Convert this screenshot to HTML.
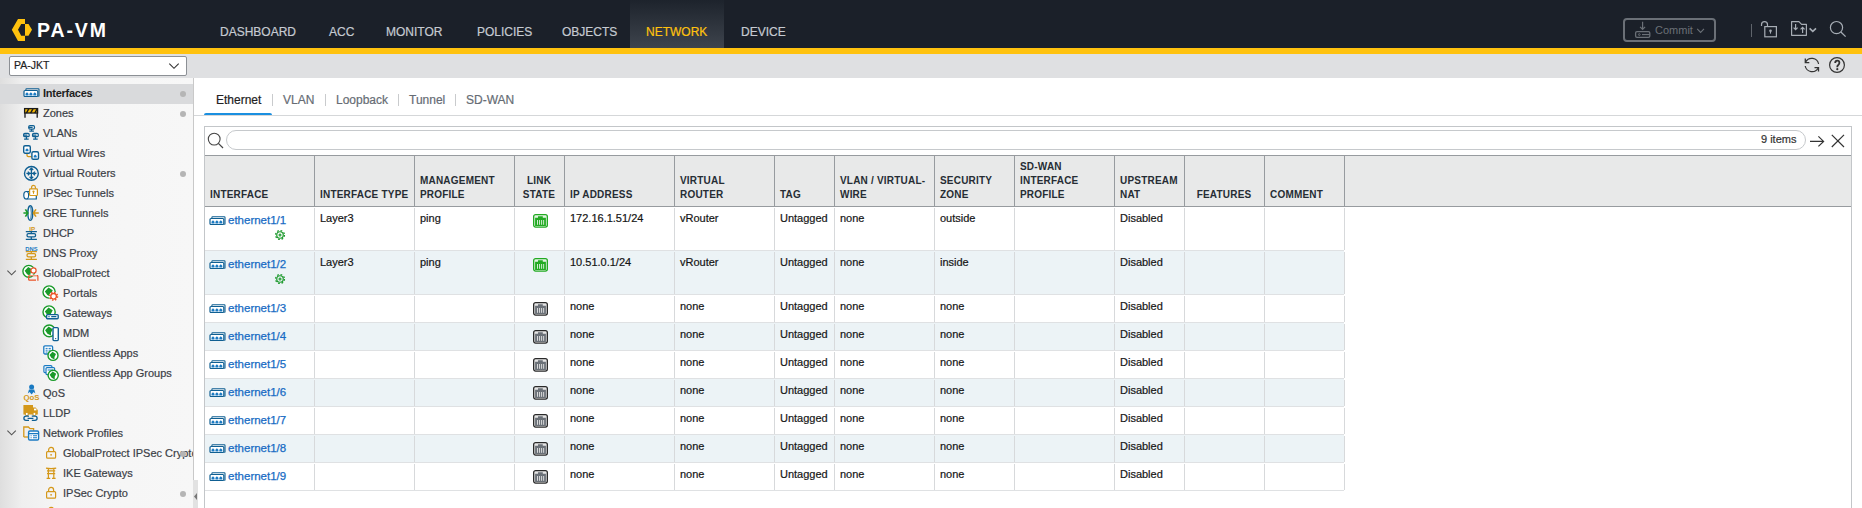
<!DOCTYPE html>
<html><head><meta charset="utf-8"><title>PA-VM Network Interfaces</title>
<style>
html,body{margin:0;padding:0;width:1862px;height:508px;overflow:hidden;background:#fff;font-family:"Liberation Sans", sans-serif;}
.t{position:absolute;white-space:nowrap;line-height:1;}
.s{-webkit-text-stroke:0.2px currentColor}
.r{position:absolute;}
svg.r{overflow:visible}
</style></head><body>
<div class="r" style="left:0px;top:0px;width:1862px;height:48px;background:#1b2029"></div>
<div class="r" style="left:630px;top:0px;width:94px;height:48px;background:linear-gradient(#1d232c,#3e444d)"></div>
<div class="r" style="left:0px;top:48px;width:1862px;height:6px;background:#ffc20e"></div>
<svg class="r" style="left:0px;top:0px;" width="40" height="48" viewBox="0 0 40 48"><polygon fill="#ffc20e" points="18,19 25,19 25,24 21.2,24 18,29.7 21.2,35.7 25,35.7 25,41 18,41 11.8,29.7"/><polygon fill="#ffc20e" points="25,24 28.5,24 32,29.7 28.5,35.7 25,35.7"/></svg>
<div class="t" style="left:37px;top:21px;font-size:19.5px;color:#ffffff;font-weight:bold;letter-spacing:1.9px">PA-VM</div>
<div class="t s" style="left:220px;top:26px;font-size:12px;color:#c5cad1;font-weight:normal;">DASHBOARD</div>
<div class="t s" style="left:329px;top:26px;font-size:12px;color:#c5cad1;font-weight:normal;">ACC</div>
<div class="t s" style="left:386px;top:26px;font-size:12px;color:#c5cad1;font-weight:normal;">MONITOR</div>
<div class="t s" style="left:477px;top:26px;font-size:12px;color:#c5cad1;font-weight:normal;">POLICIES</div>
<div class="t s" style="left:562px;top:26px;font-size:12px;color:#c5cad1;font-weight:normal;">OBJECTS</div>
<div class="t s" style="left:646px;top:26px;font-size:12px;color:#ffc20e;font-weight:normal;">NETWORK</div>
<div class="t s" style="left:741px;top:26px;font-size:12px;color:#c5cad1;font-weight:normal;">DEVICE</div>
<div class="r" style="left:1623px;top:18px;width:93px;height:24px;box-sizing:border-box;border:2px solid #6b7077;border-radius:4px"></div>
<svg class="r" style="left:1634px;top:20px;" width="18" height="20" viewBox="0 0 18 20"><path d="M8.6 1.8 V9.4 M6.1 6.9 L8.6 9.4 L11.1 6.9" stroke="#6b7077" stroke-width="1.2" fill="none"/><rect x="1.6" y="11.7" width="14.2" height="5.7" rx="1.4" stroke="#6b7077" stroke-width="1.3" fill="none"/><circle cx="5.3" cy="14.55" r="0.9" stroke="#6b7077" stroke-width="0.9" fill="none"/><path d="M8 14.55 H15.8" stroke="#6b7077" stroke-width="1.2"/></svg>
<div class="t s" style="left:1655px;top:25px;font-size:11px;color:#6b7077;font-weight:normal;-webkit-text-stroke:0">Commit</div>
<svg class="r" style="left:1696px;top:27px;" width="10" height="8" viewBox="0 0 10 8"><path d="M1.2 1.8 L4.6 5.4 L8 1.8" stroke="#6b7077" stroke-width="1.1" fill="none"/></svg>
<div class="r" style="left:1751px;top:24px;width:1px;height:13px;background:#5f646b"></div>
<svg class="r" style="left:1759px;top:19px;" width="20" height="20" viewBox="0 0 20 20"><path d="M2.5 7 V5.7 A3 3 0 0 1 8.5 5.7 V7.4" stroke="#a7adb5" stroke-width="1.2" fill="none"/><rect x="5.8" y="7.6" width="11.6" height="10.2" stroke="#a7adb5" stroke-width="1.2" fill="none"/><circle cx="11.5" cy="11.7" r="1.3" fill="#a7adb5"/><path d="M11.5 12 V14.6" stroke="#a7adb5" stroke-width="1.1"/></svg>
<svg class="r" style="left:1789px;top:19px;" width="30" height="20" viewBox="0 0 30 20"><path d="M2.6 2.6 H9.9 L12.6 5.3 H17.4 V16.3 H2.6 Z" stroke="#a7adb5" stroke-width="1.2" fill="none" stroke-linejoin="round"/><path d="M6.6 5 V10.6 M4.6 8.6 L6.6 10.6 L8.6 8.6" stroke="#a7adb5" stroke-width="1.2" fill="none"/><path d="M13.6 8.3 V14 M11.6 10.3 L13.6 8.3 L15.6 10.3" stroke="#a7adb5" stroke-width="1.2" fill="none"/><path d="M20.6 9.4 L23.8 12.4 L27 9.4" stroke="#a7adb5" stroke-width="1.6" fill="none"/></svg>
<svg class="r" style="left:1828px;top:19px;" width="20" height="20" viewBox="0 0 20 20"><circle cx="8.5" cy="8.6" r="6.1" stroke="#a7adb5" stroke-width="1.2" fill="none"/><path d="M12.9 13 L17.6 17.6" stroke="#a7adb5" stroke-width="1.3"/></svg>
<div class="r" style="left:0px;top:54px;width:1862px;height:24px;background:#dfe0e2"></div>
<div class="r" style="left:9px;top:56px;width:178px;height:20px;box-sizing:border-box;background:#fff;border:1px solid #8c9095;border-radius:2px"></div>
<div class="t s" style="left:14px;top:60px;font-size:10.5px;color:#1f1f1f;font-weight:normal;">PA-JKT</div>
<svg class="r" style="left:168px;top:62px;" width="12" height="8" viewBox="0 0 12 8"><path d="M1.3 1.6 L6 6.3 L10.7 1.6" stroke="#333" stroke-width="1.1" fill="none"/></svg>
<svg class="r" style="left:1803px;top:56px;" width="18" height="18" viewBox="0 0 18 18"><path d="M15.6 8 A7 7 0 0 0 2.6 6" stroke="#333" stroke-width="1.2" fill="none"/><path d="M2.2 10 A7 7 0 0 0 15.2 12" stroke="#333" stroke-width="1.2" fill="none"/><path d="M2.3 2.6 V6.6 H6.3" stroke="#333" stroke-width="1.3" fill="none"/><path d="M15.5 15.6 V11.6 H11.5" stroke="#333" stroke-width="1.3" fill="none"/></svg>
<svg class="r" style="left:1828px;top:56px;" width="18" height="18" viewBox="0 0 18 18"><circle cx="9" cy="9" r="7.4" stroke="#333" stroke-width="1.2" fill="none"/><path d="M7.2 7.1 Q7.2 4.7 9.3 4.7 Q11.4 4.7 11.4 6.8 Q11.4 8.1 10.3 8.9 Q9.3 9.6 9.3 10.7 V11.3" stroke="#333" stroke-width="1.8" fill="none"/><circle cx="9.3" cy="13.2" r="1.1" fill="#333"/></svg>
<div style="position:absolute;left:0;top:0;width:193px;height:508px;overflow:hidden">
<div class="r" style="left:0px;top:78px;width:193px;height:430px;background:linear-gradient(to right,#dedede 0px,#efefef 22px,#f5f5f5 60px,#f7f7f7 193px)"></div>
<div class="r" style="left:0px;top:84px;width:193px;height:20px;background:#d9dadc"></div>
<svg class="r" style="left:23px;top:87px;" width="20" height="20" viewBox="0 0 20 20"><path d="M2.9 3 V2.5 Q2.9 1.8 3.6 1.8 H15.3 Q16 1.8 16 2.5 V8.7 Q16 9.4 15.3 9.4" stroke="#0f5f92" stroke-width="1.1" fill="none"/><rect x="1" y="3.5" width="13.8" height="6" rx="1" stroke="#0f5f92" stroke-width="1.2" fill="#fff"/><path d="M2.5 8.5 V6.8 L4 5.3 L5.5 6.8 V8.5Z M6.4 8.5 V6.8 L7.9 5.3 L9.4 6.8 V8.5Z M10.3 8.5 V6.8 L11.8 5.3 L13.3 6.8 V8.5Z" fill="#1a7ac2"/></svg>
<div class="t" style="left:43px;top:88px;font-size:11px;color:#1f1f1f;font-weight:bold;letter-spacing:-0.25px">Interfaces</div>
<div class="r" style="left:180px;top:90.5px;width:6px;height:6px;border-radius:3px;background:#b5b5b5"></div>
<svg class="r" style="left:23px;top:104px;" width="20" height="20" viewBox="0 0 20 20"><rect x="1.6" y="4.6" width="13" height="4.4" fill="#f2b705" stroke="#1b1b1b" stroke-width="1.3"/><path d="M3.4 9.2 L6 4.4 M7.6 9.2 L10.2 4.4 M11.8 9.2 L14.4 4.4" stroke="#1b1b1b" stroke-width="1.4"/><path d="M2 9 V13.8 M14.2 9 V13.8" stroke="#1b1b1b" stroke-width="1.3"/></svg>
<div class="t s" style="left:43px;top:108px;font-size:11px;color:#3b4046;font-weight:normal;">Zones</div>
<div class="r" style="left:180px;top:110.5px;width:6px;height:6px;border-radius:3px;background:#b5b5b5"></div>
<svg class="r" style="left:23px;top:124px;" width="20" height="20" viewBox="0 0 20 20"><g stroke="#0f5f92" stroke-width="1.2" fill="none"><rect x="5.7" y="1.6" width="5.8" height="3.5" rx="1.3"/><path d="M5.7 3.35 H9.6 M8.6 5.1 V6.6 M6.3 7.2 H10.9"/><rect x="0.6" y="9.4" width="5.6" height="3.3" rx="1.3"/><path d="M0.6 11.05 H4.4 M3.4 12.7 V14.4 M1.1 15.1 H5.7"/><rect x="9.5" y="9.4" width="5.8" height="3.3" rx="1.3"/><path d="M9.5 11.05 H13.4 M12.4 12.7 V14.4 M10.1 15.1 H14.7"/></g></svg>
<div class="t s" style="left:43px;top:128px;font-size:11px;color:#3b4046;font-weight:normal;">VLANs</div>
<svg class="r" style="left:23px;top:144px;" width="20" height="20" viewBox="0 0 20 20"><path d="M4 9.4 V11.2 Q4 12.6 5.4 12.6 H8.8" stroke="#d4981a" stroke-width="1.3" fill="none"/><rect x="0.7" y="1.7" width="6.6" height="7.5" rx="1.4" stroke="#0f5f92" stroke-width="1.4" fill="#fff"/><path d="M2.5 7.3 V5.8 L4 4.3 L5.5 5.8 V7.3Z" fill="#1a7ac2"/><rect x="8.9" y="7.8" width="6.6" height="7.5" rx="1.4" stroke="#0f5f92" stroke-width="1.4" fill="#fff"/><path d="M10.7 13.4 V11.9 L12.2 10.4 L13.7 11.9 V13.4Z" fill="#1a7ac2"/></svg>
<div class="t s" style="left:43px;top:148px;font-size:11px;color:#3b4046;font-weight:normal;">Virtual Wires</div>
<svg class="r" style="left:23px;top:164px;" width="20" height="20" viewBox="0 0 20 20"><circle cx="8.4" cy="9.4" r="6.9" stroke="#0f5f92" stroke-width="1.4" fill="none"/><g stroke="#0f5f92" stroke-width="1.3" fill="none"><path d="M8.4 4.2 V14.6 M3.4 9.4 H13.4"/><path d="M6.6 6 L8.4 4.2 L10.2 6 M6.6 12.8 L8.4 14.6 L10.2 12.8 M4.8 7.6 L6.6 9.4 L4.8 11.2 M12 7.6 L10.2 9.4 L12 11.2"/></g></svg>
<div class="t s" style="left:43px;top:168px;font-size:11px;color:#3b4046;font-weight:normal;">Virtual Routers</div>
<div class="r" style="left:180px;top:170.5px;width:6px;height:6px;border-radius:3px;background:#b5b5b5"></div>
<svg class="r" style="left:23px;top:184px;" width="20" height="20" viewBox="0 0 20 20"><path d="M3.4 7.5 H13.3 V15 H3.4 Q0.8 15 0.8 11.25 Q0.8 7.5 3.4 7.5 Z" stroke="#0f5f92" stroke-width="1.2" fill="#fff"/><path d="M3.4 7.5 Q5.6 7.5 5.6 11.25 Q5.6 15 3.4 15" stroke="#0f5f92" stroke-width="1.1" fill="none"/><path d="M8.6 4.8 V3.2 A1.9 1.9 0 0 1 12.4 3.2 V4.8" stroke="#d4981a" stroke-width="1.2" fill="none"/><rect x="6.6" y="4.9" width="7.8" height="6.6" rx="0.8" stroke="#d4981a" stroke-width="1.2" fill="#fff"/><circle cx="10.5" cy="7.6" r="1.1" fill="#d4981a"/><path d="M10.5 8 V9.8" stroke="#d4981a" stroke-width="1"/></svg>
<div class="t s" style="left:43px;top:188px;font-size:11px;color:#3b4046;font-weight:normal;">IPSec Tunnels</div>
<svg class="r" style="left:23px;top:204px;" width="20" height="20" viewBox="0 0 20 20"><ellipse cx="7.3" cy="9" rx="2.4" ry="7.3" stroke="#0f5f92" stroke-width="1.4" fill="#fff"/><path d="M7.8 3 Q8.8 9 7.8 15" stroke="#0f5f92" stroke-width="0.9" fill="none"/><path d="M0.4 9 H4.8 M2.4 5.4 L4.8 9 L2.4 12.6" stroke="#1a9a2a" stroke-width="1.6" fill="none"/><path d="M15.8 9 H10.4 M13 5.4 L10.4 9 L13 12.6" stroke="#d4981a" stroke-width="1.6" fill="none"/></svg>
<div class="t s" style="left:43px;top:208px;font-size:11px;color:#3b4046;font-weight:normal;">GRE Tunnels</div>
<svg class="r" style="left:23px;top:224px;" width="20" height="20" viewBox="0 0 20 20"><text x="9.2" y="6.6" text-anchor="middle" font-family="Liberation Sans" font-weight="bold" font-size="6.2" fill="#d4981a">IP</text><path d="M2.8 7.6 H13.9 M8.3 7.6 V9.2 M5.4 9.6 H11.2 Q12.6 9.6 12.6 11.2 Q12.6 12.8 11.2 12.8 H5.4 Q4 12.8 4 11.2 Q4 9.6 5.4 9.6 M8.3 12.8 V15 M2.8 15.4 H13.9" stroke="#0f5f92" stroke-width="1.3" fill="none"/></svg>
<div class="t s" style="left:43px;top:228px;font-size:11px;color:#3b4046;font-weight:normal;">DHCP</div>
<svg class="r" style="left:23px;top:244px;" width="20" height="20" viewBox="0 0 20 20"><text x="8.4" y="6.6" text-anchor="middle" font-family="Liberation Sans" font-weight="bold" font-size="5.8" fill="#1a7ac2">DNS</text><path d="M2.8 7.6 H13.9 M8.3 7.6 V9.2 M5.4 9.6 H11.2 Q12.6 9.6 12.6 11.2 Q12.6 12.8 11.2 12.8 H5.4 Q4 12.8 4 11.2 Q4 9.6 5.4 9.6 M8.3 12.8 V15 M2.8 15.4 H13.9" stroke="#d4981a" stroke-width="1.3" fill="none"/></svg>
<div class="t s" style="left:43px;top:248px;font-size:11px;color:#3b4046;font-weight:normal;">DNS Proxy</div>
<svg class="r" style="left:23px;top:264px;" width="20" height="20" viewBox="0 0 20 20"><circle cx="5.8" cy="7.3" r="5.9" stroke="#1a9a2a" stroke-width="1.4" fill="#fff"/><path d="M1.67 6.71 L5.21 2.874999999999999 L9.34 5.529999999999999 L7.57 9.07 L7.57 12.02 L4.029999999999999 10.25 Z" fill="#1a9a2a"/><circle cx="10.5" cy="6.4" r="2.6" stroke="#ea5326" stroke-width="1.2" fill="#fff"/><path d="M5.7 16.2 V12.4 Q5.7 11.6 6.5 11.6 H14.2 Q14.9 11.6 14.9 12.4 V16.8 M5.7 16.2 H13" stroke="#ea5326" stroke-width="1.2" fill="none"/><path d="M6.5 11 H14" stroke="#fff" stroke-width="0.8"/></svg>
<svg class="r" style="left:6px;top:269px;" width="12" height="9" viewBox="0 0 12 9"><path d="M1.4 1.6 L5.6 5.8 L9.8 1.6" stroke="#555" stroke-width="1.1" fill="none"/></svg>
<div class="t s" style="left:43px;top:268px;font-size:11px;color:#3b4046;font-weight:normal;">GlobalProtect</div>
<svg class="r" style="left:43px;top:284px;" width="20" height="20" viewBox="0 0 20 20"><circle cx="6.1" cy="8" r="6.1" stroke="#1a9a2a" stroke-width="1.4" fill="#fff"/><path d="M1.83 7.39 L5.489999999999999 3.4250000000000007 L9.76 6.17 L7.93 9.83 L7.93 12.879999999999999 L4.27 11.05 Z" fill="#1a9a2a"/><circle cx="10.6" cy="12.3" r="4.6" fill="#fff"/><circle cx="10.6" cy="12.3" r="3.9" stroke="#ea5326" stroke-width="1.5" fill="none" stroke-dasharray="1.5 1.56"/><circle cx="10.6" cy="12.3" r="2.8" stroke="#ea5326" stroke-width="1.3" fill="#fff"/></svg>
<div class="t s" style="left:63px;top:288px;font-size:11px;color:#3b4046;font-weight:normal;">Portals</div>
<svg class="r" style="left:43px;top:304px;" width="20" height="20" viewBox="0 0 20 20"><circle cx="6.1" cy="8" r="6.1" stroke="#1a9a2a" stroke-width="1.4" fill="#fff"/><path d="M1.83 7.39 L5.489999999999999 3.4250000000000007 L9.76 6.17 L7.93 9.83 L7.93 12.879999999999999 L4.27 11.05 Z" fill="#1a9a2a"/><rect x="3.6" y="10.6" width="11.6" height="4.2" rx="1" stroke="#0f5f92" stroke-width="1.4" fill="#fff"/><path d="M5.4 12.7 H6.6 M8.2 12.7 H13.4" stroke="#0f5f92" stroke-width="1.2"/></svg>
<div class="t s" style="left:63px;top:308px;font-size:11px;color:#3b4046;font-weight:normal;">Gateways</div>
<svg class="r" style="left:43px;top:324px;" width="20" height="20" viewBox="0 0 20 20"><circle cx="6.2" cy="6.9" r="5.9" stroke="#1a9a2a" stroke-width="1.4" fill="#fff"/><path d="M2.0700000000000003 6.3100000000000005 L5.61 2.4749999999999996 L9.74 5.130000000000001 L7.970000000000001 8.67 L7.970000000000001 11.620000000000001 L4.43 9.850000000000001 Z" fill="#1a9a2a"/><rect x="10" y="3.6" width="5.3" height="13" rx="1" stroke="#0f5f92" stroke-width="1.4" fill="#fff"/><circle cx="12.65" cy="14.6" r="0.7" fill="#0f5f92"/></svg>
<div class="t s" style="left:63px;top:328px;font-size:11px;color:#3b4046;font-weight:normal;">MDM</div>
<svg class="r" style="left:43px;top:344px;" width="20" height="20" viewBox="0 0 20 20"><rect x="0.8" y="1.8" width="8.8" height="8.2" rx="1.2" stroke="#1a7ac2" stroke-width="1.3" fill="#fff"/><path d="M2.6 4.4 H4.6 M5.6 4.4 H7.8 M2.6 6.2 H4.6 M5.6 6.2 H7.8 M2.6 8 H4.6 M5.6 8 H7.8" stroke="#1a7ac2" stroke-width="1"/><circle cx="10" cy="11.4" r="5" stroke="#1a9a2a" stroke-width="1.4" fill="#fff"/><path d="M6.5 10.9 L9.5 7.65 L13.0 9.9 L11.5 12.9 L11.5 15.4 L8.5 13.9 Z" fill="#1a9a2a"/></svg>
<div class="t s" style="left:63px;top:348px;font-size:11px;color:#3b4046;font-weight:normal;">Clientless Apps</div>
<svg class="r" style="left:43px;top:364px;" width="20" height="20" viewBox="0 0 20 20"><rect x="0.9" y="1.6" width="8" height="7" rx="1" stroke="#1a7ac2" stroke-width="1.2" fill="#fff"/><rect x="3" y="3.6" width="8.6" height="7" rx="1" stroke="#1a7ac2" stroke-width="1.2" fill="#fff"/><path d="M4.6 6 H10" stroke="#1a7ac2" stroke-width="1"/><circle cx="10.2" cy="11.3" r="5.1" stroke="#1a9a2a" stroke-width="1.4" fill="#fff"/><path d="M6.63 10.790000000000001 L9.69 7.475000000000001 L13.259999999999998 9.770000000000001 L11.729999999999999 12.83 L11.729999999999999 15.38 L8.67 13.850000000000001 Z" fill="#1a9a2a"/></svg>
<div class="t s" style="left:63px;top:368px;font-size:11px;color:#3b4046;font-weight:normal;">Clientless App Groups</div>
<svg class="r" style="left:23px;top:384px;" width="20" height="20" viewBox="0 0 20 20"><circle cx="8.6" cy="3.1" r="2.5" fill="#1a7ac2"/><path d="M4.8 9.4 L6 5.4 H11.2 L12.4 9.4 L10.6 8 L8.6 10.4 L6.6 8Z" fill="#1a7ac2"/><text x="8.4" y="16.2" text-anchor="middle" font-family="Liberation Sans" font-weight="bold" font-size="7.8" fill="#d4981a">QoS</text></svg>
<div class="t s" style="left:43px;top:388px;font-size:11px;color:#3b4046;font-weight:normal;">QoS</div>
<svg class="r" style="left:23px;top:404px;" width="20" height="20" viewBox="0 0 20 20"><path d="M0.4 1 H10 V3.4 H12.6 L14.8 6 V10.4 H0.4Z" fill="#d4981a"/><rect x="11" y="4.6" width="2.4" height="1.8" fill="#fff"/><circle cx="3.8" cy="10" r="1.6" fill="#fff" stroke="#d4981a" stroke-width="1"/><circle cx="11.4" cy="10" r="1.6" fill="#fff" stroke="#d4981a" stroke-width="1"/><path d="M6 12.2 H3 Q0.9 12.2 0.9 14.3 Q0.9 16.4 3 16.4 H6 M8.8 12.2 H12 Q14.1 12.2 14.1 14.3 Q14.1 16.4 12 16.4 H8.8 M4.6 14.3 H10.4" stroke="#0f5f92" stroke-width="1.3" fill="none"/></svg>
<div class="t s" style="left:43px;top:408px;font-size:11px;color:#3b4046;font-weight:normal;">LLDP</div>
<svg class="r" style="left:23px;top:424px;" width="20" height="20" viewBox="0 0 20 20"><path d="M0.8 13 V3 H5.4 L7 4.6 H10.6 V6.4" stroke="#d4981a" stroke-width="1.3" fill="none"/><path d="M0.8 13 H5" stroke="#d4981a" stroke-width="1.3"/><rect x="5.6" y="7" width="10" height="9" rx="1.2" stroke="#1a7ac2" stroke-width="1.4" fill="#fff"/><path d="M5.6 9.6 H15.6" stroke="#1a7ac2" stroke-width="1.3"/><path d="M7.6 11.8 H8.6 M10 11.8 H14 M7.6 13.8 H8.6 M10 13.8 H14" stroke="#1a7ac2" stroke-width="1.1"/></svg>
<svg class="r" style="left:6px;top:429px;" width="12" height="9" viewBox="0 0 12 9"><path d="M1.4 1.6 L5.6 5.8 L9.8 1.6" stroke="#555" stroke-width="1.1" fill="none"/></svg>
<div class="t s" style="left:43px;top:428px;font-size:11px;color:#3b4046;font-weight:normal;">Network Profiles</div>
<svg class="r" style="left:43px;top:444px;" width="20" height="20" viewBox="0 0 20 20"><rect x="3.6" y="7.6" width="9" height="6.6" rx="1" stroke="#d4981a" stroke-width="1.2" fill="none"/><path d="M5.6 7.6 V5.9 A2.5 2.5 0 0 1 10.6 5.9 V7.6" stroke="#d4981a" stroke-width="1.2" fill="none"/><circle cx="8.1" cy="10.8" r="0.9" fill="#d4981a"/></svg>
<div class="t s" style="left:63px;top:448px;font-size:11px;color:#3b4046;font-weight:normal;">GlobalProtect IPSec Crypto</div>
<div class="r" style="left:180px;top:450.5px;width:6px;height:6px;border-radius:3px;background:#b5b5b5"></div>
<svg class="r" style="left:43px;top:464px;" width="20" height="20" viewBox="0 0 20 20"><path d="M3 4.2 Q8.1 5.2 13.2 4.2 M4 6.8 H12.2 M5.4 4.6 V14.4 M10.8 4.6 V14.4 M4 9.6 H12.2 M3.6 14.4 H7.2 M9 14.4 H12.6" stroke="#d4981a" stroke-width="1.2" fill="none"/></svg>
<div class="t s" style="left:63px;top:468px;font-size:11px;color:#3b4046;font-weight:normal;">IKE Gateways</div>
<svg class="r" style="left:43px;top:484px;" width="20" height="20" viewBox="0 0 20 20"><rect x="3.6" y="7.6" width="9" height="6.6" rx="1" stroke="#d4981a" stroke-width="1.2" fill="none"/><path d="M5.6 7.6 V5.9 A2.5 2.5 0 0 1 10.6 5.9 V7.6" stroke="#d4981a" stroke-width="1.2" fill="none"/><circle cx="8.1" cy="10.8" r="0.9" fill="#d4981a"/></svg>
<div class="t s" style="left:63px;top:488px;font-size:11px;color:#3b4046;font-weight:normal;">IPSec Crypto</div>
<div class="r" style="left:180px;top:490.5px;width:6px;height:6px;border-radius:3px;background:#b5b5b5"></div>
<svg class="r" style="left:43px;top:504px;" width="20" height="20" viewBox="0 0 20 20"><rect x="3.6" y="7.6" width="9" height="6.6" rx="1" stroke="#d4981a" stroke-width="1.2" fill="none"/><path d="M5.6 7.6 V5.9 A2.5 2.5 0 0 1 10.6 5.9 V7.6" stroke="#d4981a" stroke-width="1.2" fill="none"/><circle cx="8.1" cy="10.8" r="0.9" fill="#d4981a"/></svg>
<div class="t s" style="left:63px;top:508px;font-size:11px;color:#3b4046;font-weight:normal;">IKE Crypto</div>
</div>
<div class="r" style="left:193px;top:78px;width:1px;height:430px;background:#c9c9c9"></div>
<div class="r" style="left:193px;top:480px;width:5px;height:28px;background:#e2e2e2"></div>
<svg class="r" style="left:193px;top:492px;" width="5" height="9" viewBox="0 0 5 9"><path d="M4 1 L1 4.5 L4 8Z" fill="#777"/></svg>
<div class="t s" style="left:216px;top:94px;font-size:12px;color:#222;font-weight:normal;">Ethernet</div>
<div class="t s" style="left:283px;top:94px;font-size:12px;color:#666c74;font-weight:normal;">VLAN</div>
<div class="t s" style="left:336px;top:94px;font-size:12px;color:#666c74;font-weight:normal;">Loopback</div>
<div class="t s" style="left:409px;top:94px;font-size:12px;color:#666c74;font-weight:normal;">Tunnel</div>
<div class="t s" style="left:466px;top:94px;font-size:12px;color:#666c74;font-weight:normal;">SD-WAN</div>
<div class="r" style="left:272px;top:94px;width:1px;height:12px;background:#c9cbcd"></div>
<div class="r" style="left:325px;top:94px;width:1px;height:12px;background:#c9cbcd"></div>
<div class="r" style="left:398px;top:94px;width:1px;height:12px;background:#c9cbcd"></div>
<div class="r" style="left:455px;top:94px;width:1px;height:12px;background:#c9cbcd"></div>
<div class="r" style="left:194px;top:115px;width:1668px;height:1px;background:#d5d7d9"></div>
<div class="r" style="left:204px;top:112.5px;width:68px;height:2.5px;background:#1a8fe0;border-radius:2px 2px 0 0"></div>
<div class="r" style="left:204px;top:126px;width:1648px;height:400px;box-sizing:border-box;border:1px solid #c3c6c9;border-bottom:none"></div>
<svg class="r" style="left:206px;top:131px;" width="20" height="20" viewBox="0 0 20 20"><circle cx="8.2" cy="8.1" r="5.9" stroke="#444" stroke-width="1.1" fill="none"/><path d="M12.4 12.4 L17 17" stroke="#444" stroke-width="1.2"/></svg>
<div class="r" style="left:226px;top:130px;width:1580px;height:20px;box-sizing:border-box;border:1px solid #c6c9cc;border-radius:10px;background:#fff"></div>
<div class="t s" style="left:1761px;top:134px;font-size:11px;color:#333;font-weight:normal;">9 items</div>
<svg class="r" style="left:1808px;top:133px;" width="20" height="16" viewBox="0 0 20 16"><path d="M2 8.4 H15.6 M10.4 3.4 L15.6 8.4 L10.4 13.4" stroke="#333" stroke-width="1.2" fill="none"/></svg>
<svg class="r" style="left:1829px;top:132px;" width="18" height="18" viewBox="0 0 18 18"><path d="M2.8 2.8 L15 15 M15 2.8 L2.8 15" stroke="#333" stroke-width="1.2"/></svg>
<div class="r" style="left:205px;top:155px;width:1646px;height:1px;background:#979b9f"></div>
<div class="r" style="left:205px;top:156px;width:1646px;height:50px;background:#e8e9e9"></div>
<div class="r" style="left:205px;top:206px;width:1646px;height:1px;background:#979b9f"></div>
<div class="r" style="left:314px;top:156px;width:1px;height:50px;background:#979b9f"></div>
<div class="r" style="left:414px;top:156px;width:1px;height:50px;background:#979b9f"></div>
<div class="r" style="left:514px;top:156px;width:1px;height:50px;background:#979b9f"></div>
<div class="r" style="left:564px;top:156px;width:1px;height:50px;background:#979b9f"></div>
<div class="r" style="left:674px;top:156px;width:1px;height:50px;background:#979b9f"></div>
<div class="r" style="left:774px;top:156px;width:1px;height:50px;background:#979b9f"></div>
<div class="r" style="left:834px;top:156px;width:1px;height:50px;background:#979b9f"></div>
<div class="r" style="left:934px;top:156px;width:1px;height:50px;background:#979b9f"></div>
<div class="r" style="left:1014px;top:156px;width:1px;height:50px;background:#979b9f"></div>
<div class="r" style="left:1114px;top:156px;width:1px;height:50px;background:#979b9f"></div>
<div class="r" style="left:1184px;top:156px;width:1px;height:50px;background:#979b9f"></div>
<div class="r" style="left:1264px;top:156px;width:1px;height:50px;background:#979b9f"></div>
<div class="r" style="left:1344px;top:156px;width:1px;height:50px;background:#979b9f"></div>
<div class="t" style="left:210px;top:190px;font-size:10px;color:#262d34;font-weight:bold;letter-spacing:0.2px">INTERFACE</div>
<div class="t" style="left:320px;top:190px;font-size:10px;color:#262d34;font-weight:bold;letter-spacing:0.2px">INTERFACE TYPE</div>
<div class="t" style="left:420px;top:176px;font-size:10px;color:#262d34;font-weight:bold;letter-spacing:0.2px">MANAGEMENT</div>
<div class="t" style="left:420px;top:190px;font-size:10px;color:#262d34;font-weight:bold;letter-spacing:0.2px">PROFILE</div>
<div class="t" style="left:514px;width:50px;text-align:center;top:176px;font-size:10px;color:#262d34;font-weight:bold;letter-spacing:0.2px">LINK</div>
<div class="t" style="left:514px;width:50px;text-align:center;top:190px;font-size:10px;color:#262d34;font-weight:bold;letter-spacing:0.2px">STATE</div>
<div class="t" style="left:570px;top:190px;font-size:10px;color:#262d34;font-weight:bold;letter-spacing:0.2px">IP ADDRESS</div>
<div class="t" style="left:680px;top:176px;font-size:10px;color:#262d34;font-weight:bold;letter-spacing:0.2px">VIRTUAL</div>
<div class="t" style="left:680px;top:190px;font-size:10px;color:#262d34;font-weight:bold;letter-spacing:0.2px">ROUTER</div>
<div class="t" style="left:780px;top:190px;font-size:10px;color:#262d34;font-weight:bold;letter-spacing:0.2px">TAG</div>
<div class="t" style="left:840px;top:176px;font-size:10px;color:#262d34;font-weight:bold;letter-spacing:0.2px">VLAN / VIRTUAL-</div>
<div class="t" style="left:840px;top:190px;font-size:10px;color:#262d34;font-weight:bold;letter-spacing:0.2px">WIRE</div>
<div class="t" style="left:940px;top:176px;font-size:10px;color:#262d34;font-weight:bold;letter-spacing:0.2px">SECURITY</div>
<div class="t" style="left:940px;top:190px;font-size:10px;color:#262d34;font-weight:bold;letter-spacing:0.2px">ZONE</div>
<div class="t" style="left:1020px;top:162px;font-size:10px;color:#262d34;font-weight:bold;letter-spacing:0.2px">SD-WAN</div>
<div class="t" style="left:1020px;top:176px;font-size:10px;color:#262d34;font-weight:bold;letter-spacing:0.2px">INTERFACE</div>
<div class="t" style="left:1020px;top:190px;font-size:10px;color:#262d34;font-weight:bold;letter-spacing:0.2px">PROFILE</div>
<div class="t" style="left:1120px;top:176px;font-size:10px;color:#262d34;font-weight:bold;letter-spacing:0.2px">UPSTREAM</div>
<div class="t" style="left:1120px;top:190px;font-size:10px;color:#262d34;font-weight:bold;letter-spacing:0.2px">NAT</div>
<div class="t" style="left:1184px;width:80px;text-align:center;top:190px;font-size:10px;color:#262d34;font-weight:bold;letter-spacing:0.2px">FEATURES</div>
<div class="t" style="left:1270px;top:190px;font-size:10px;color:#262d34;font-weight:bold;letter-spacing:0.2px">COMMENT</div>
<div class="r" style="left:205px;top:207px;width:1139px;height:44px;background:#ffffff"></div>
<div class="r" style="left:205px;top:250px;width:1139px;height:1px;background:#dfe1e3"></div>
<div class="r" style="left:314px;top:208px;width:1px;height:42px;background:#d7d9db"></div>
<div class="r" style="left:414px;top:208px;width:1px;height:42px;background:#d7d9db"></div>
<div class="r" style="left:514px;top:208px;width:1px;height:42px;background:#d7d9db"></div>
<div class="r" style="left:564px;top:208px;width:1px;height:42px;background:#d7d9db"></div>
<div class="r" style="left:674px;top:208px;width:1px;height:42px;background:#d7d9db"></div>
<div class="r" style="left:774px;top:208px;width:1px;height:42px;background:#d7d9db"></div>
<div class="r" style="left:834px;top:208px;width:1px;height:42px;background:#d7d9db"></div>
<div class="r" style="left:934px;top:208px;width:1px;height:42px;background:#d7d9db"></div>
<div class="r" style="left:1014px;top:208px;width:1px;height:42px;background:#d7d9db"></div>
<div class="r" style="left:1114px;top:208px;width:1px;height:42px;background:#d7d9db"></div>
<div class="r" style="left:1184px;top:208px;width:1px;height:42px;background:#d7d9db"></div>
<div class="r" style="left:1264px;top:208px;width:1px;height:42px;background:#d7d9db"></div>
<div class="r" style="left:1344px;top:208px;width:1px;height:42px;background:#d7d9db"></div>
<svg class="r" style="left:209px;top:215px;" width="18" height="11" viewBox="0 0 18 11"><path d="M2.9 3 V2.5 Q2.9 1.8 3.6 1.8 H15.3 Q16 1.8 16 2.5 V8.7 Q16 9.4 15.3 9.4" stroke="#0f5f92" stroke-width="1.1" fill="none"/><rect x="1" y="3.5" width="13.8" height="6" rx="1" stroke="#0f5f92" stroke-width="1.2" fill="#fff"/><path d="M2.5 8.5 V6.8 L4 5.3 L5.5 6.8 V8.5Z M6.4 8.5 V6.8 L7.9 5.3 L9.4 6.8 V8.5Z M10.3 8.5 V6.8 L11.8 5.3 L13.3 6.8 V8.5Z" fill="#1a7ac2"/></svg>
<div class="t s" style="left:228px;top:215px;font-size:11.5px;color:#176bc4;font-weight:normal;-webkit-text-stroke:0.25px currentColor">ethernet1/1</div>
<svg class="r" style="left:274px;top:229px;" width="12" height="12" viewBox="0 0 12 12"><circle cx="6" cy="6" r="4.45" stroke="#1e9a2e" stroke-width="1.3" fill="none" stroke-dasharray="1.75 1.745"/><circle cx="6" cy="6" r="3.25" stroke="#1e9a2e" stroke-width="1.2" fill="none"/><circle cx="6" cy="6" r="1.5" fill="#1e9a2e"/><circle cx="6" cy="6" r="0.6" fill="#9fd6a6"/></svg>
<div class="t s" style="left:320px;top:213px;font-size:11px;color:#151515;font-weight:normal;">Layer3</div>
<div class="t s" style="left:420px;top:213px;font-size:11px;color:#151515;font-weight:normal;">ping</div>
<svg class="r" style="left:532px;top:213px;" width="17" height="15" viewBox="0 0 17 15"><rect x="1.65" y="1.55" width="13.7" height="12.5" rx="2" stroke="#22aa22" stroke-width="1.3" fill="#e4f4e4"/><path d="M3.1 12.9 V4.8 H6 V3.3 H10.8 V4.8 H13.9 V12.9Z" fill="#22aa22"/><path d="M5.5 7 V11.8 M7.55 7 V11.8 M9.6 7 V11.8 M11.65 7 V11.8" stroke="#e4f4e4" stroke-width="0.9"/></svg>
<div class="t s" style="left:570px;top:213px;font-size:11px;color:#151515;font-weight:normal;">172.16.1.51/24</div>
<div class="t s" style="left:680px;top:213px;font-size:11px;color:#151515;font-weight:normal;">vRouter</div>
<div class="t s" style="left:780px;top:213px;font-size:11px;color:#151515;font-weight:normal;">Untagged</div>
<div class="t s" style="left:840px;top:213px;font-size:11px;color:#151515;font-weight:normal;">none</div>
<div class="t s" style="left:940px;top:213px;font-size:11px;color:#151515;font-weight:normal;">outside</div>
<div class="t s" style="left:1120px;top:213px;font-size:11px;color:#151515;font-weight:normal;">Disabled</div>
<div class="r" style="left:205px;top:251px;width:1139px;height:44px;background:#ecf3f6"></div>
<div class="r" style="left:205px;top:294px;width:1139px;height:1px;background:#dfe1e3"></div>
<div class="r" style="left:314px;top:252px;width:1px;height:42px;background:#d7d9db"></div>
<div class="r" style="left:414px;top:252px;width:1px;height:42px;background:#d7d9db"></div>
<div class="r" style="left:514px;top:252px;width:1px;height:42px;background:#d7d9db"></div>
<div class="r" style="left:564px;top:252px;width:1px;height:42px;background:#d7d9db"></div>
<div class="r" style="left:674px;top:252px;width:1px;height:42px;background:#d7d9db"></div>
<div class="r" style="left:774px;top:252px;width:1px;height:42px;background:#d7d9db"></div>
<div class="r" style="left:834px;top:252px;width:1px;height:42px;background:#d7d9db"></div>
<div class="r" style="left:934px;top:252px;width:1px;height:42px;background:#d7d9db"></div>
<div class="r" style="left:1014px;top:252px;width:1px;height:42px;background:#d7d9db"></div>
<div class="r" style="left:1114px;top:252px;width:1px;height:42px;background:#d7d9db"></div>
<div class="r" style="left:1184px;top:252px;width:1px;height:42px;background:#d7d9db"></div>
<div class="r" style="left:1264px;top:252px;width:1px;height:42px;background:#d7d9db"></div>
<div class="r" style="left:1344px;top:252px;width:1px;height:42px;background:#d7d9db"></div>
<svg class="r" style="left:209px;top:259px;" width="18" height="11" viewBox="0 0 18 11"><path d="M2.9 3 V2.5 Q2.9 1.8 3.6 1.8 H15.3 Q16 1.8 16 2.5 V8.7 Q16 9.4 15.3 9.4" stroke="#0f5f92" stroke-width="1.1" fill="none"/><rect x="1" y="3.5" width="13.8" height="6" rx="1" stroke="#0f5f92" stroke-width="1.2" fill="#fff"/><path d="M2.5 8.5 V6.8 L4 5.3 L5.5 6.8 V8.5Z M6.4 8.5 V6.8 L7.9 5.3 L9.4 6.8 V8.5Z M10.3 8.5 V6.8 L11.8 5.3 L13.3 6.8 V8.5Z" fill="#1a7ac2"/></svg>
<div class="t s" style="left:228px;top:259px;font-size:11.5px;color:#176bc4;font-weight:normal;-webkit-text-stroke:0.25px currentColor">ethernet1/2</div>
<svg class="r" style="left:274px;top:273px;" width="12" height="12" viewBox="0 0 12 12"><circle cx="6" cy="6" r="4.45" stroke="#1e9a2e" stroke-width="1.3" fill="none" stroke-dasharray="1.75 1.745"/><circle cx="6" cy="6" r="3.25" stroke="#1e9a2e" stroke-width="1.2" fill="none"/><circle cx="6" cy="6" r="1.5" fill="#1e9a2e"/><circle cx="6" cy="6" r="0.6" fill="#9fd6a6"/></svg>
<div class="t s" style="left:320px;top:257px;font-size:11px;color:#151515;font-weight:normal;">Layer3</div>
<div class="t s" style="left:420px;top:257px;font-size:11px;color:#151515;font-weight:normal;">ping</div>
<svg class="r" style="left:532px;top:257px;" width="17" height="15" viewBox="0 0 17 15"><rect x="1.65" y="1.55" width="13.7" height="12.5" rx="2" stroke="#22aa22" stroke-width="1.3" fill="#e4f4e4"/><path d="M3.1 12.9 V4.8 H6 V3.3 H10.8 V4.8 H13.9 V12.9Z" fill="#22aa22"/><path d="M5.5 7 V11.8 M7.55 7 V11.8 M9.6 7 V11.8 M11.65 7 V11.8" stroke="#e4f4e4" stroke-width="0.9"/></svg>
<div class="t s" style="left:570px;top:257px;font-size:11px;color:#151515;font-weight:normal;">10.51.0.1/24</div>
<div class="t s" style="left:680px;top:257px;font-size:11px;color:#151515;font-weight:normal;">vRouter</div>
<div class="t s" style="left:780px;top:257px;font-size:11px;color:#151515;font-weight:normal;">Untagged</div>
<div class="t s" style="left:840px;top:257px;font-size:11px;color:#151515;font-weight:normal;">none</div>
<div class="t s" style="left:940px;top:257px;font-size:11px;color:#151515;font-weight:normal;">inside</div>
<div class="t s" style="left:1120px;top:257px;font-size:11px;color:#151515;font-weight:normal;">Disabled</div>
<div class="r" style="left:205px;top:295px;width:1139px;height:28px;background:#ffffff"></div>
<div class="r" style="left:205px;top:322px;width:1139px;height:1px;background:#dfe1e3"></div>
<div class="r" style="left:314px;top:296px;width:1px;height:26px;background:#d7d9db"></div>
<div class="r" style="left:414px;top:296px;width:1px;height:26px;background:#d7d9db"></div>
<div class="r" style="left:514px;top:296px;width:1px;height:26px;background:#d7d9db"></div>
<div class="r" style="left:564px;top:296px;width:1px;height:26px;background:#d7d9db"></div>
<div class="r" style="left:674px;top:296px;width:1px;height:26px;background:#d7d9db"></div>
<div class="r" style="left:774px;top:296px;width:1px;height:26px;background:#d7d9db"></div>
<div class="r" style="left:834px;top:296px;width:1px;height:26px;background:#d7d9db"></div>
<div class="r" style="left:934px;top:296px;width:1px;height:26px;background:#d7d9db"></div>
<div class="r" style="left:1014px;top:296px;width:1px;height:26px;background:#d7d9db"></div>
<div class="r" style="left:1114px;top:296px;width:1px;height:26px;background:#d7d9db"></div>
<div class="r" style="left:1184px;top:296px;width:1px;height:26px;background:#d7d9db"></div>
<div class="r" style="left:1264px;top:296px;width:1px;height:26px;background:#d7d9db"></div>
<div class="r" style="left:1344px;top:296px;width:1px;height:26px;background:#d7d9db"></div>
<svg class="r" style="left:209px;top:303px;" width="18" height="11" viewBox="0 0 18 11"><path d="M2.9 3 V2.5 Q2.9 1.8 3.6 1.8 H15.3 Q16 1.8 16 2.5 V8.7 Q16 9.4 15.3 9.4" stroke="#0f5f92" stroke-width="1.1" fill="none"/><rect x="1" y="3.5" width="13.8" height="6" rx="1" stroke="#0f5f92" stroke-width="1.2" fill="#fff"/><path d="M2.5 8.5 V6.8 L4 5.3 L5.5 6.8 V8.5Z M6.4 8.5 V6.8 L7.9 5.3 L9.4 6.8 V8.5Z M10.3 8.5 V6.8 L11.8 5.3 L13.3 6.8 V8.5Z" fill="#1a7ac2"/></svg>
<div class="t s" style="left:228px;top:303px;font-size:11.5px;color:#176bc4;font-weight:normal;-webkit-text-stroke:0.25px currentColor">ethernet1/3</div>
<svg class="r" style="left:532px;top:301px;" width="17" height="15" viewBox="0 0 17 15"><rect x="1.65" y="1.55" width="13.7" height="12.5" rx="2" stroke="#2a2a2a" stroke-width="1.3" fill="#e6e6e6"/><path d="M3.1 12.9 V4.8 H6 V3.3 H10.8 V4.8 H13.9 V12.9Z" fill="#6b7178"/><path d="M5.5 7 V11.8 M7.55 7 V11.8 M9.6 7 V11.8 M11.65 7 V11.8" stroke="#e6e6e6" stroke-width="0.9"/></svg>
<div class="t s" style="left:570px;top:301px;font-size:11px;color:#151515;font-weight:normal;">none</div>
<div class="t s" style="left:680px;top:301px;font-size:11px;color:#151515;font-weight:normal;">none</div>
<div class="t s" style="left:780px;top:301px;font-size:11px;color:#151515;font-weight:normal;">Untagged</div>
<div class="t s" style="left:840px;top:301px;font-size:11px;color:#151515;font-weight:normal;">none</div>
<div class="t s" style="left:940px;top:301px;font-size:11px;color:#151515;font-weight:normal;">none</div>
<div class="t s" style="left:1120px;top:301px;font-size:11px;color:#151515;font-weight:normal;">Disabled</div>
<div class="r" style="left:205px;top:323px;width:1139px;height:28px;background:#ecf3f6"></div>
<div class="r" style="left:205px;top:350px;width:1139px;height:1px;background:#dfe1e3"></div>
<div class="r" style="left:314px;top:324px;width:1px;height:26px;background:#d7d9db"></div>
<div class="r" style="left:414px;top:324px;width:1px;height:26px;background:#d7d9db"></div>
<div class="r" style="left:514px;top:324px;width:1px;height:26px;background:#d7d9db"></div>
<div class="r" style="left:564px;top:324px;width:1px;height:26px;background:#d7d9db"></div>
<div class="r" style="left:674px;top:324px;width:1px;height:26px;background:#d7d9db"></div>
<div class="r" style="left:774px;top:324px;width:1px;height:26px;background:#d7d9db"></div>
<div class="r" style="left:834px;top:324px;width:1px;height:26px;background:#d7d9db"></div>
<div class="r" style="left:934px;top:324px;width:1px;height:26px;background:#d7d9db"></div>
<div class="r" style="left:1014px;top:324px;width:1px;height:26px;background:#d7d9db"></div>
<div class="r" style="left:1114px;top:324px;width:1px;height:26px;background:#d7d9db"></div>
<div class="r" style="left:1184px;top:324px;width:1px;height:26px;background:#d7d9db"></div>
<div class="r" style="left:1264px;top:324px;width:1px;height:26px;background:#d7d9db"></div>
<div class="r" style="left:1344px;top:324px;width:1px;height:26px;background:#d7d9db"></div>
<svg class="r" style="left:209px;top:331px;" width="18" height="11" viewBox="0 0 18 11"><path d="M2.9 3 V2.5 Q2.9 1.8 3.6 1.8 H15.3 Q16 1.8 16 2.5 V8.7 Q16 9.4 15.3 9.4" stroke="#0f5f92" stroke-width="1.1" fill="none"/><rect x="1" y="3.5" width="13.8" height="6" rx="1" stroke="#0f5f92" stroke-width="1.2" fill="#fff"/><path d="M2.5 8.5 V6.8 L4 5.3 L5.5 6.8 V8.5Z M6.4 8.5 V6.8 L7.9 5.3 L9.4 6.8 V8.5Z M10.3 8.5 V6.8 L11.8 5.3 L13.3 6.8 V8.5Z" fill="#1a7ac2"/></svg>
<div class="t s" style="left:228px;top:331px;font-size:11.5px;color:#176bc4;font-weight:normal;-webkit-text-stroke:0.25px currentColor">ethernet1/4</div>
<svg class="r" style="left:532px;top:329px;" width="17" height="15" viewBox="0 0 17 15"><rect x="1.65" y="1.55" width="13.7" height="12.5" rx="2" stroke="#2a2a2a" stroke-width="1.3" fill="#e6e6e6"/><path d="M3.1 12.9 V4.8 H6 V3.3 H10.8 V4.8 H13.9 V12.9Z" fill="#6b7178"/><path d="M5.5 7 V11.8 M7.55 7 V11.8 M9.6 7 V11.8 M11.65 7 V11.8" stroke="#e6e6e6" stroke-width="0.9"/></svg>
<div class="t s" style="left:570px;top:329px;font-size:11px;color:#151515;font-weight:normal;">none</div>
<div class="t s" style="left:680px;top:329px;font-size:11px;color:#151515;font-weight:normal;">none</div>
<div class="t s" style="left:780px;top:329px;font-size:11px;color:#151515;font-weight:normal;">Untagged</div>
<div class="t s" style="left:840px;top:329px;font-size:11px;color:#151515;font-weight:normal;">none</div>
<div class="t s" style="left:940px;top:329px;font-size:11px;color:#151515;font-weight:normal;">none</div>
<div class="t s" style="left:1120px;top:329px;font-size:11px;color:#151515;font-weight:normal;">Disabled</div>
<div class="r" style="left:205px;top:351px;width:1139px;height:28px;background:#ffffff"></div>
<div class="r" style="left:205px;top:378px;width:1139px;height:1px;background:#dfe1e3"></div>
<div class="r" style="left:314px;top:352px;width:1px;height:26px;background:#d7d9db"></div>
<div class="r" style="left:414px;top:352px;width:1px;height:26px;background:#d7d9db"></div>
<div class="r" style="left:514px;top:352px;width:1px;height:26px;background:#d7d9db"></div>
<div class="r" style="left:564px;top:352px;width:1px;height:26px;background:#d7d9db"></div>
<div class="r" style="left:674px;top:352px;width:1px;height:26px;background:#d7d9db"></div>
<div class="r" style="left:774px;top:352px;width:1px;height:26px;background:#d7d9db"></div>
<div class="r" style="left:834px;top:352px;width:1px;height:26px;background:#d7d9db"></div>
<div class="r" style="left:934px;top:352px;width:1px;height:26px;background:#d7d9db"></div>
<div class="r" style="left:1014px;top:352px;width:1px;height:26px;background:#d7d9db"></div>
<div class="r" style="left:1114px;top:352px;width:1px;height:26px;background:#d7d9db"></div>
<div class="r" style="left:1184px;top:352px;width:1px;height:26px;background:#d7d9db"></div>
<div class="r" style="left:1264px;top:352px;width:1px;height:26px;background:#d7d9db"></div>
<div class="r" style="left:1344px;top:352px;width:1px;height:26px;background:#d7d9db"></div>
<svg class="r" style="left:209px;top:359px;" width="18" height="11" viewBox="0 0 18 11"><path d="M2.9 3 V2.5 Q2.9 1.8 3.6 1.8 H15.3 Q16 1.8 16 2.5 V8.7 Q16 9.4 15.3 9.4" stroke="#0f5f92" stroke-width="1.1" fill="none"/><rect x="1" y="3.5" width="13.8" height="6" rx="1" stroke="#0f5f92" stroke-width="1.2" fill="#fff"/><path d="M2.5 8.5 V6.8 L4 5.3 L5.5 6.8 V8.5Z M6.4 8.5 V6.8 L7.9 5.3 L9.4 6.8 V8.5Z M10.3 8.5 V6.8 L11.8 5.3 L13.3 6.8 V8.5Z" fill="#1a7ac2"/></svg>
<div class="t s" style="left:228px;top:359px;font-size:11.5px;color:#176bc4;font-weight:normal;-webkit-text-stroke:0.25px currentColor">ethernet1/5</div>
<svg class="r" style="left:532px;top:357px;" width="17" height="15" viewBox="0 0 17 15"><rect x="1.65" y="1.55" width="13.7" height="12.5" rx="2" stroke="#2a2a2a" stroke-width="1.3" fill="#e6e6e6"/><path d="M3.1 12.9 V4.8 H6 V3.3 H10.8 V4.8 H13.9 V12.9Z" fill="#6b7178"/><path d="M5.5 7 V11.8 M7.55 7 V11.8 M9.6 7 V11.8 M11.65 7 V11.8" stroke="#e6e6e6" stroke-width="0.9"/></svg>
<div class="t s" style="left:570px;top:357px;font-size:11px;color:#151515;font-weight:normal;">none</div>
<div class="t s" style="left:680px;top:357px;font-size:11px;color:#151515;font-weight:normal;">none</div>
<div class="t s" style="left:780px;top:357px;font-size:11px;color:#151515;font-weight:normal;">Untagged</div>
<div class="t s" style="left:840px;top:357px;font-size:11px;color:#151515;font-weight:normal;">none</div>
<div class="t s" style="left:940px;top:357px;font-size:11px;color:#151515;font-weight:normal;">none</div>
<div class="t s" style="left:1120px;top:357px;font-size:11px;color:#151515;font-weight:normal;">Disabled</div>
<div class="r" style="left:205px;top:379px;width:1139px;height:28px;background:#ecf3f6"></div>
<div class="r" style="left:205px;top:406px;width:1139px;height:1px;background:#dfe1e3"></div>
<div class="r" style="left:314px;top:380px;width:1px;height:26px;background:#d7d9db"></div>
<div class="r" style="left:414px;top:380px;width:1px;height:26px;background:#d7d9db"></div>
<div class="r" style="left:514px;top:380px;width:1px;height:26px;background:#d7d9db"></div>
<div class="r" style="left:564px;top:380px;width:1px;height:26px;background:#d7d9db"></div>
<div class="r" style="left:674px;top:380px;width:1px;height:26px;background:#d7d9db"></div>
<div class="r" style="left:774px;top:380px;width:1px;height:26px;background:#d7d9db"></div>
<div class="r" style="left:834px;top:380px;width:1px;height:26px;background:#d7d9db"></div>
<div class="r" style="left:934px;top:380px;width:1px;height:26px;background:#d7d9db"></div>
<div class="r" style="left:1014px;top:380px;width:1px;height:26px;background:#d7d9db"></div>
<div class="r" style="left:1114px;top:380px;width:1px;height:26px;background:#d7d9db"></div>
<div class="r" style="left:1184px;top:380px;width:1px;height:26px;background:#d7d9db"></div>
<div class="r" style="left:1264px;top:380px;width:1px;height:26px;background:#d7d9db"></div>
<div class="r" style="left:1344px;top:380px;width:1px;height:26px;background:#d7d9db"></div>
<svg class="r" style="left:209px;top:387px;" width="18" height="11" viewBox="0 0 18 11"><path d="M2.9 3 V2.5 Q2.9 1.8 3.6 1.8 H15.3 Q16 1.8 16 2.5 V8.7 Q16 9.4 15.3 9.4" stroke="#0f5f92" stroke-width="1.1" fill="none"/><rect x="1" y="3.5" width="13.8" height="6" rx="1" stroke="#0f5f92" stroke-width="1.2" fill="#fff"/><path d="M2.5 8.5 V6.8 L4 5.3 L5.5 6.8 V8.5Z M6.4 8.5 V6.8 L7.9 5.3 L9.4 6.8 V8.5Z M10.3 8.5 V6.8 L11.8 5.3 L13.3 6.8 V8.5Z" fill="#1a7ac2"/></svg>
<div class="t s" style="left:228px;top:387px;font-size:11.5px;color:#176bc4;font-weight:normal;-webkit-text-stroke:0.25px currentColor">ethernet1/6</div>
<svg class="r" style="left:532px;top:385px;" width="17" height="15" viewBox="0 0 17 15"><rect x="1.65" y="1.55" width="13.7" height="12.5" rx="2" stroke="#2a2a2a" stroke-width="1.3" fill="#e6e6e6"/><path d="M3.1 12.9 V4.8 H6 V3.3 H10.8 V4.8 H13.9 V12.9Z" fill="#6b7178"/><path d="M5.5 7 V11.8 M7.55 7 V11.8 M9.6 7 V11.8 M11.65 7 V11.8" stroke="#e6e6e6" stroke-width="0.9"/></svg>
<div class="t s" style="left:570px;top:385px;font-size:11px;color:#151515;font-weight:normal;">none</div>
<div class="t s" style="left:680px;top:385px;font-size:11px;color:#151515;font-weight:normal;">none</div>
<div class="t s" style="left:780px;top:385px;font-size:11px;color:#151515;font-weight:normal;">Untagged</div>
<div class="t s" style="left:840px;top:385px;font-size:11px;color:#151515;font-weight:normal;">none</div>
<div class="t s" style="left:940px;top:385px;font-size:11px;color:#151515;font-weight:normal;">none</div>
<div class="t s" style="left:1120px;top:385px;font-size:11px;color:#151515;font-weight:normal;">Disabled</div>
<div class="r" style="left:205px;top:407px;width:1139px;height:28px;background:#ffffff"></div>
<div class="r" style="left:205px;top:434px;width:1139px;height:1px;background:#dfe1e3"></div>
<div class="r" style="left:314px;top:408px;width:1px;height:26px;background:#d7d9db"></div>
<div class="r" style="left:414px;top:408px;width:1px;height:26px;background:#d7d9db"></div>
<div class="r" style="left:514px;top:408px;width:1px;height:26px;background:#d7d9db"></div>
<div class="r" style="left:564px;top:408px;width:1px;height:26px;background:#d7d9db"></div>
<div class="r" style="left:674px;top:408px;width:1px;height:26px;background:#d7d9db"></div>
<div class="r" style="left:774px;top:408px;width:1px;height:26px;background:#d7d9db"></div>
<div class="r" style="left:834px;top:408px;width:1px;height:26px;background:#d7d9db"></div>
<div class="r" style="left:934px;top:408px;width:1px;height:26px;background:#d7d9db"></div>
<div class="r" style="left:1014px;top:408px;width:1px;height:26px;background:#d7d9db"></div>
<div class="r" style="left:1114px;top:408px;width:1px;height:26px;background:#d7d9db"></div>
<div class="r" style="left:1184px;top:408px;width:1px;height:26px;background:#d7d9db"></div>
<div class="r" style="left:1264px;top:408px;width:1px;height:26px;background:#d7d9db"></div>
<div class="r" style="left:1344px;top:408px;width:1px;height:26px;background:#d7d9db"></div>
<svg class="r" style="left:209px;top:415px;" width="18" height="11" viewBox="0 0 18 11"><path d="M2.9 3 V2.5 Q2.9 1.8 3.6 1.8 H15.3 Q16 1.8 16 2.5 V8.7 Q16 9.4 15.3 9.4" stroke="#0f5f92" stroke-width="1.1" fill="none"/><rect x="1" y="3.5" width="13.8" height="6" rx="1" stroke="#0f5f92" stroke-width="1.2" fill="#fff"/><path d="M2.5 8.5 V6.8 L4 5.3 L5.5 6.8 V8.5Z M6.4 8.5 V6.8 L7.9 5.3 L9.4 6.8 V8.5Z M10.3 8.5 V6.8 L11.8 5.3 L13.3 6.8 V8.5Z" fill="#1a7ac2"/></svg>
<div class="t s" style="left:228px;top:415px;font-size:11.5px;color:#176bc4;font-weight:normal;-webkit-text-stroke:0.25px currentColor">ethernet1/7</div>
<svg class="r" style="left:532px;top:413px;" width="17" height="15" viewBox="0 0 17 15"><rect x="1.65" y="1.55" width="13.7" height="12.5" rx="2" stroke="#2a2a2a" stroke-width="1.3" fill="#e6e6e6"/><path d="M3.1 12.9 V4.8 H6 V3.3 H10.8 V4.8 H13.9 V12.9Z" fill="#6b7178"/><path d="M5.5 7 V11.8 M7.55 7 V11.8 M9.6 7 V11.8 M11.65 7 V11.8" stroke="#e6e6e6" stroke-width="0.9"/></svg>
<div class="t s" style="left:570px;top:413px;font-size:11px;color:#151515;font-weight:normal;">none</div>
<div class="t s" style="left:680px;top:413px;font-size:11px;color:#151515;font-weight:normal;">none</div>
<div class="t s" style="left:780px;top:413px;font-size:11px;color:#151515;font-weight:normal;">Untagged</div>
<div class="t s" style="left:840px;top:413px;font-size:11px;color:#151515;font-weight:normal;">none</div>
<div class="t s" style="left:940px;top:413px;font-size:11px;color:#151515;font-weight:normal;">none</div>
<div class="t s" style="left:1120px;top:413px;font-size:11px;color:#151515;font-weight:normal;">Disabled</div>
<div class="r" style="left:205px;top:435px;width:1139px;height:28px;background:#ecf3f6"></div>
<div class="r" style="left:205px;top:462px;width:1139px;height:1px;background:#dfe1e3"></div>
<div class="r" style="left:314px;top:436px;width:1px;height:26px;background:#d7d9db"></div>
<div class="r" style="left:414px;top:436px;width:1px;height:26px;background:#d7d9db"></div>
<div class="r" style="left:514px;top:436px;width:1px;height:26px;background:#d7d9db"></div>
<div class="r" style="left:564px;top:436px;width:1px;height:26px;background:#d7d9db"></div>
<div class="r" style="left:674px;top:436px;width:1px;height:26px;background:#d7d9db"></div>
<div class="r" style="left:774px;top:436px;width:1px;height:26px;background:#d7d9db"></div>
<div class="r" style="left:834px;top:436px;width:1px;height:26px;background:#d7d9db"></div>
<div class="r" style="left:934px;top:436px;width:1px;height:26px;background:#d7d9db"></div>
<div class="r" style="left:1014px;top:436px;width:1px;height:26px;background:#d7d9db"></div>
<div class="r" style="left:1114px;top:436px;width:1px;height:26px;background:#d7d9db"></div>
<div class="r" style="left:1184px;top:436px;width:1px;height:26px;background:#d7d9db"></div>
<div class="r" style="left:1264px;top:436px;width:1px;height:26px;background:#d7d9db"></div>
<div class="r" style="left:1344px;top:436px;width:1px;height:26px;background:#d7d9db"></div>
<svg class="r" style="left:209px;top:443px;" width="18" height="11" viewBox="0 0 18 11"><path d="M2.9 3 V2.5 Q2.9 1.8 3.6 1.8 H15.3 Q16 1.8 16 2.5 V8.7 Q16 9.4 15.3 9.4" stroke="#0f5f92" stroke-width="1.1" fill="none"/><rect x="1" y="3.5" width="13.8" height="6" rx="1" stroke="#0f5f92" stroke-width="1.2" fill="#fff"/><path d="M2.5 8.5 V6.8 L4 5.3 L5.5 6.8 V8.5Z M6.4 8.5 V6.8 L7.9 5.3 L9.4 6.8 V8.5Z M10.3 8.5 V6.8 L11.8 5.3 L13.3 6.8 V8.5Z" fill="#1a7ac2"/></svg>
<div class="t s" style="left:228px;top:443px;font-size:11.5px;color:#176bc4;font-weight:normal;-webkit-text-stroke:0.25px currentColor">ethernet1/8</div>
<svg class="r" style="left:532px;top:441px;" width="17" height="15" viewBox="0 0 17 15"><rect x="1.65" y="1.55" width="13.7" height="12.5" rx="2" stroke="#2a2a2a" stroke-width="1.3" fill="#e6e6e6"/><path d="M3.1 12.9 V4.8 H6 V3.3 H10.8 V4.8 H13.9 V12.9Z" fill="#6b7178"/><path d="M5.5 7 V11.8 M7.55 7 V11.8 M9.6 7 V11.8 M11.65 7 V11.8" stroke="#e6e6e6" stroke-width="0.9"/></svg>
<div class="t s" style="left:570px;top:441px;font-size:11px;color:#151515;font-weight:normal;">none</div>
<div class="t s" style="left:680px;top:441px;font-size:11px;color:#151515;font-weight:normal;">none</div>
<div class="t s" style="left:780px;top:441px;font-size:11px;color:#151515;font-weight:normal;">Untagged</div>
<div class="t s" style="left:840px;top:441px;font-size:11px;color:#151515;font-weight:normal;">none</div>
<div class="t s" style="left:940px;top:441px;font-size:11px;color:#151515;font-weight:normal;">none</div>
<div class="t s" style="left:1120px;top:441px;font-size:11px;color:#151515;font-weight:normal;">Disabled</div>
<div class="r" style="left:205px;top:463px;width:1139px;height:28px;background:#ffffff"></div>
<div class="r" style="left:205px;top:490px;width:1139px;height:1px;background:#dfe1e3"></div>
<div class="r" style="left:314px;top:464px;width:1px;height:26px;background:#d7d9db"></div>
<div class="r" style="left:414px;top:464px;width:1px;height:26px;background:#d7d9db"></div>
<div class="r" style="left:514px;top:464px;width:1px;height:26px;background:#d7d9db"></div>
<div class="r" style="left:564px;top:464px;width:1px;height:26px;background:#d7d9db"></div>
<div class="r" style="left:674px;top:464px;width:1px;height:26px;background:#d7d9db"></div>
<div class="r" style="left:774px;top:464px;width:1px;height:26px;background:#d7d9db"></div>
<div class="r" style="left:834px;top:464px;width:1px;height:26px;background:#d7d9db"></div>
<div class="r" style="left:934px;top:464px;width:1px;height:26px;background:#d7d9db"></div>
<div class="r" style="left:1014px;top:464px;width:1px;height:26px;background:#d7d9db"></div>
<div class="r" style="left:1114px;top:464px;width:1px;height:26px;background:#d7d9db"></div>
<div class="r" style="left:1184px;top:464px;width:1px;height:26px;background:#d7d9db"></div>
<div class="r" style="left:1264px;top:464px;width:1px;height:26px;background:#d7d9db"></div>
<div class="r" style="left:1344px;top:464px;width:1px;height:26px;background:#d7d9db"></div>
<svg class="r" style="left:209px;top:471px;" width="18" height="11" viewBox="0 0 18 11"><path d="M2.9 3 V2.5 Q2.9 1.8 3.6 1.8 H15.3 Q16 1.8 16 2.5 V8.7 Q16 9.4 15.3 9.4" stroke="#0f5f92" stroke-width="1.1" fill="none"/><rect x="1" y="3.5" width="13.8" height="6" rx="1" stroke="#0f5f92" stroke-width="1.2" fill="#fff"/><path d="M2.5 8.5 V6.8 L4 5.3 L5.5 6.8 V8.5Z M6.4 8.5 V6.8 L7.9 5.3 L9.4 6.8 V8.5Z M10.3 8.5 V6.8 L11.8 5.3 L13.3 6.8 V8.5Z" fill="#1a7ac2"/></svg>
<div class="t s" style="left:228px;top:471px;font-size:11.5px;color:#176bc4;font-weight:normal;-webkit-text-stroke:0.25px currentColor">ethernet1/9</div>
<svg class="r" style="left:532px;top:469px;" width="17" height="15" viewBox="0 0 17 15"><rect x="1.65" y="1.55" width="13.7" height="12.5" rx="2" stroke="#2a2a2a" stroke-width="1.3" fill="#e6e6e6"/><path d="M3.1 12.9 V4.8 H6 V3.3 H10.8 V4.8 H13.9 V12.9Z" fill="#6b7178"/><path d="M5.5 7 V11.8 M7.55 7 V11.8 M9.6 7 V11.8 M11.65 7 V11.8" stroke="#e6e6e6" stroke-width="0.9"/></svg>
<div class="t s" style="left:570px;top:469px;font-size:11px;color:#151515;font-weight:normal;">none</div>
<div class="t s" style="left:680px;top:469px;font-size:11px;color:#151515;font-weight:normal;">none</div>
<div class="t s" style="left:780px;top:469px;font-size:11px;color:#151515;font-weight:normal;">Untagged</div>
<div class="t s" style="left:840px;top:469px;font-size:11px;color:#151515;font-weight:normal;">none</div>
<div class="t s" style="left:940px;top:469px;font-size:11px;color:#151515;font-weight:normal;">none</div>
<div class="t s" style="left:1120px;top:469px;font-size:11px;color:#151515;font-weight:normal;">Disabled</div>
</body></html>
